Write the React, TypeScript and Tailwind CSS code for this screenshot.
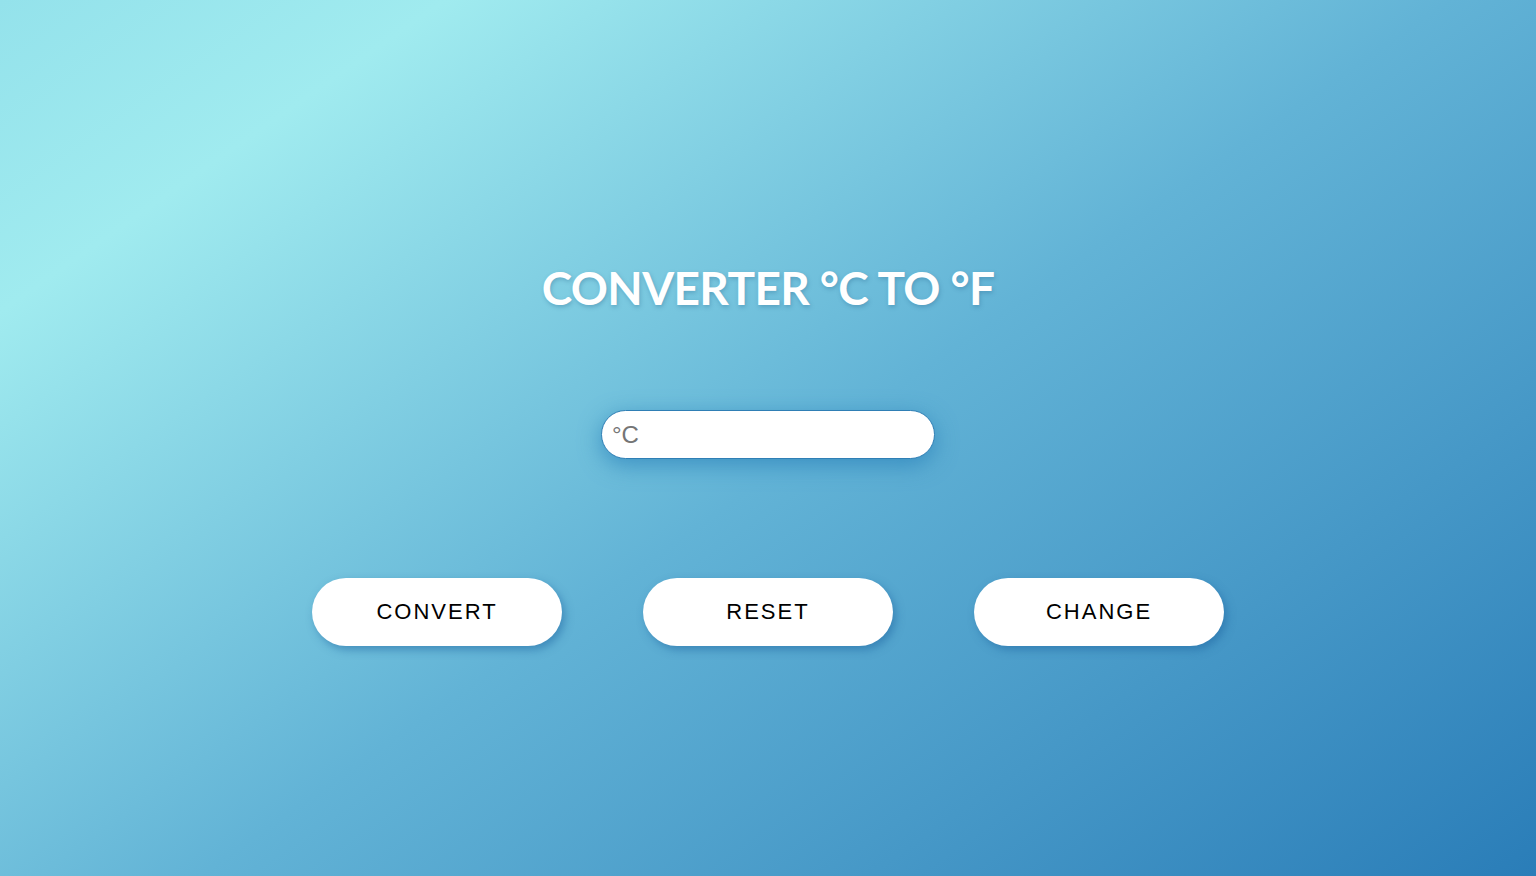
export default function App() {
  const buttons = ['CONVERT', 'RESET', 'CHANGE'];

  return (
    <div className="min-h-screen w-full bg-[linear-gradient(145deg,#94e2eb_0%,#a0ebef_16%,#62b3d6_52%,#2a7db8_100%)] flex flex-col items-center font-['Liberation_Sans',Arial,sans-serif]">
      {/* Title */}
      <h1 className="mt-[258px] text-[46px] leading-[60px] font-bold text-white tracking-[-0.6px] font-['Lato','Noto_Sans',sans-serif] [text-shadow:1px_2px_4px_rgba(40,100,140,0.35)]">
        CONVERTER °C TO °F
      </h1>

      {/* Input */}
      <input
        type="text"
        placeholder="°C"
        className="mt-[92px] w-[334px] h-[49px] rounded-full bg-white border border-[#2f7fb5] px-[10px] text-[24px] text-[#444] placeholder:text-[#757575] outline-none shadow-[0_6px_22px_rgba(41,128,185,0.7)]"
      />

      {/* Buttons */}
      <div className="mt-[119px] flex gap-[81px]">
        {buttons.map((label) => (
          <button
            key={label}
            className="w-[250px] h-[68px] pb-[2px] rounded-full bg-white text-black text-[22px] tracking-[2px] shadow-[3px_4px_9px_rgba(30,100,160,0.5)]"
          >
            {label}
          </button>
        ))}
      </div>
    </div>
  );
}
